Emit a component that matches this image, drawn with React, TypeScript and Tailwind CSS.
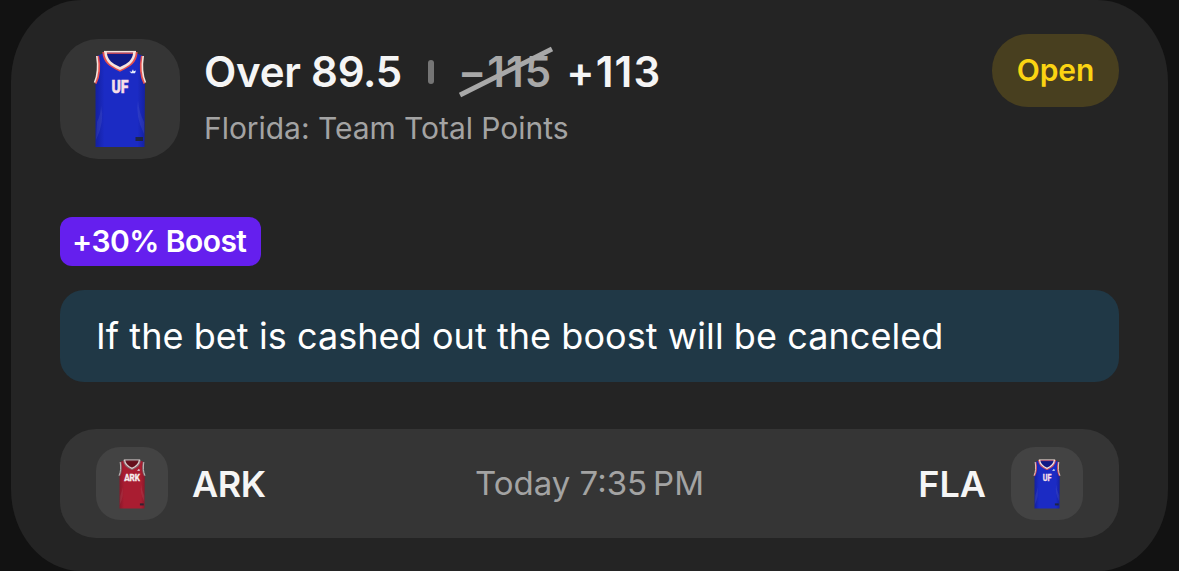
import clsx from "clsx";

type JerseyProps = {
  team: "UF" | "ARK";
  className?: string;
};

const COLORS = {
  UF: { body: "#1b2bc4", shade: "#1420a0", inner: "#101a86", trim: "#e4504f", edge: "#f5e3dc", text: "#f6dfe8" },
  ARK: { body: "#a91d31", shade: "#8a182a", inner: "#650f1c", trim: "#7d6d72", edge: "#d9cfcf", text: "#f4ecec" },
};

function Jersey({ team, className }: JerseyProps) {
  const c = COLORS[team];
  const fill = `jersey-${team}`;
  return (
    <svg viewBox="0 0 54 98" className={className}>
      <defs>
        <linearGradient id={fill}>
          <stop offset="0" stopColor={c.shade} />
          <stop offset=".18" stopColor={c.body} />
          <stop offset=".85" stopColor={c.body} />
          <stop offset="1" stopColor={c.shade} />
        </linearGradient>
      </defs>
      <path d="M11 2 H43 L42 14 L27 21 L12 14Z" fill={c.inner} />
      <path
        d="M4 6 L11 3 C13 11 20 17 27 20 C34 17 41 11 43 3 L50 6 C48 16 47 25 52 33 L51.5 97 H2.5 L2.5 33 C7 25 6 16 4 6Z"
        fill={`url(#${fill})`}
      />
      <path d="M8 55 Q8 64 4 72 L3 90 Q12 72 8 55Z M45 50 Q46 62 51 72 V84 Q42 66 45 50Z" fill="#fff" opacity=".07" />
      <path d="M11 1.8 H43" fill="none" stroke={c.edge} strokeWidth="1.8" />
      <path d="M12 3.2 H42" fill="none" stroke={c.trim} strokeWidth="1.2" />
      <path d="M10.5 2 C11 12 17 16 27 20.5 C37 16 43 12 43.5 2" fill="none" stroke={c.trim} strokeWidth="2.2" />
      <path d="M12.5 2 C13 11 19 15 27 18.5 C35 15 41 11 41.5 2" fill="none" stroke={c.edge} strokeWidth="2.6" />
      <path d="M5 6 C7 17 6.5 26 2.5 33.5 M49 6 C47 17 47.5 26 51.5 33.5" fill="none" stroke={c.trim} strokeWidth="2.2" />
      <path d="M3.8 6 C5.5 17 5 25 1.5 32.5 M50.2 6 C48.5 17 49 25 52.5 32.5" fill="none" stroke={c.edge} strokeWidth="1.6" />
      <path d="M36.5 21 L38.5 22 L40 19.2 L40.7 21.2 L43 20.5 L42 23.2 H38Z" fill="#e6eefb" />
      <rect x="42.5" y="87" width="7.5" height="4" fill="#20242f" opacity=".85" />
      <text
        x="27"
        y={team === "UF" ? 42.8 : 43.5}
        textAnchor="middle"
        textLength={team === "UF" ? 17 : 30}
        lengthAdjust="spacingAndGlyphs"
        fill={c.text}
        stroke={c.text}
        strokeWidth=".6"
        fontFamily="Roboto, sans-serif"
        fontWeight="800"
        fontSize={team === "UF" ? 17.5 : 19}
      >
        {team}
      </text>
    </svg>
  );
}

function TeamTile({ team, large }: { team: JerseyProps["team"]; large?: boolean }) {
  return (
    <div
      className={clsx(
        "flex shrink-0 items-center justify-center",
        large ? "size-[120px] rounded-[38px] bg-[#353535]" : "h-[73px] w-[72px] rounded-[24px] bg-[#434343]",
      )}
    >
      <Jersey team={team} className={large ? "h-[98px] w-[54px]" : "mr-[1px] h-[50px] w-[28px]"} />
    </div>
  );
}

export default function App() {
  return (
    <div className="h-[571px] w-[1179px] overflow-hidden bg-[#121212] px-[11px] font-['Inter',sans-serif] text-[#f5f5f5]">
      <div className="flex h-[571px] flex-col rounded-[70px/82px] bg-[#242424] px-[49px] pt-[39px]">
        <div className="flex h-[120px] items-start">
          <TeamTile team="UF" large />
          <div className="ml-[24px] flex-1">
            <div className="mt-[9px] flex h-[48px] items-center text-[42px] leading-[48px] font-semibold whitespace-nowrap">
              <span className="tracking-[-0.25px]">Over 89.5</span>
              <span className="ml-[26px] h-[24px] w-[6px] rounded-full bg-[#757575]" />
              <span className="relative ml-[24px] tracking-[1px] text-[#a8a8a8]">
                −115
                <svg viewBox="0 0 94 52" className="absolute top-[-2px] left-px h-[52px] w-[94px]">
                  <path d="M1 49 L93 3" stroke="#a8a8a8" strokeWidth="5" />
                </svg>
              </span>
              <span className="ml-[14px] tracking-[1.2px]">+113</span>
            </div>
            <div className="mt-[14px] text-[30px] leading-[36px] tracking-[-0.04px] text-[#a3a3a3]">
              Florida: Team Total Points
            </div>
          </div>
          <div className="-mt-[5px] flex h-[73px] w-[127px] items-center justify-center rounded-[36px] bg-[#483f1f] text-[30px] font-semibold tracking-[-0.1px] text-[#fbd412]">
            Open
          </div>
        </div>

        <div className="mt-[58px] flex h-[49px] w-[201px] shrink-0 items-center rounded-[12px] bg-[#651fee] pl-[12px] text-[30px] font-semibold tracking-[-0.55px] whitespace-nowrap text-white">
          +30% Boost
        </div>

        <div className="mt-[24px] flex h-[92px] shrink-0 items-center rounded-[24px] bg-[#203846] px-[36px] text-[36px] tracking-[0.06px] text-white">
          If the bet is cashed out the boost will be canceled
        </div>

        <div className="mt-[47px] grid h-[109px] shrink-0 grid-cols-3 items-center rounded-[36px] bg-[#353535] px-[36px] text-[36px]">
          <div className="flex items-center gap-[24px] font-semibold tracking-[-0.5px]">
            <TeamTile team="ARK" />
            ARK
          </div>
          <div className="text-center text-[33px] whitespace-nowrap text-[#a3a3a3]">Today 7:35{"\u2009"}PM</div>
          <div className="flex items-center justify-end gap-[25px] font-semibold">
            FLA
            <TeamTile team="UF" />
          </div>
        </div>
      </div>
    </div>
  );
}
